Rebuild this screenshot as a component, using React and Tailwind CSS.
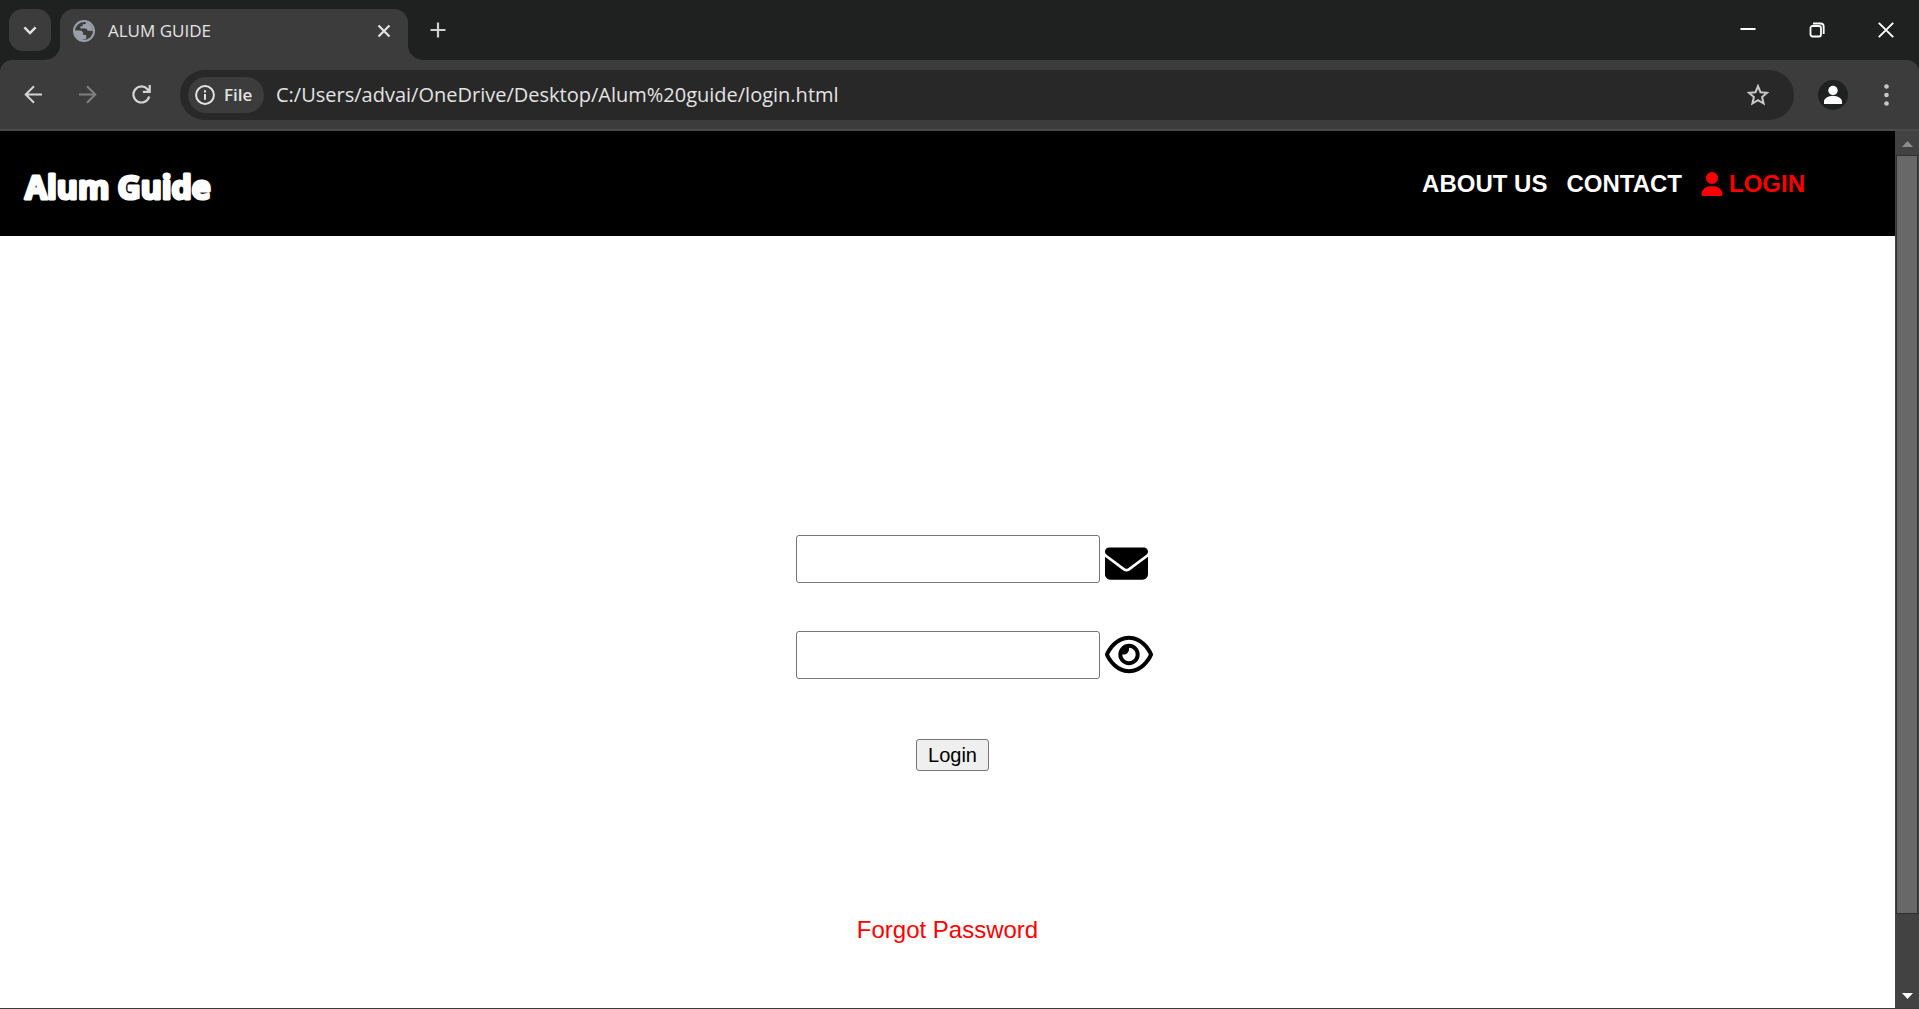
import React from "react";
import { FaEnvelope, FaRegEye, FaUser } from "react-icons/fa6";

const stroke = { fill: "none", stroke: "currentColor" };

function TabFoot({ className, d }) {
  return (
    <svg aria-hidden="true" viewBox="0 0 15 15" className={className}>
      <path d={d} fill="#3c3c3c" />
    </svg>
  );
}

function TabStrip() {
  return (
    <div className="flex h-[60px] items-end bg-[#1f2121]">
      <button
        aria-label="Search tabs"
        className="mb-[9px] ml-[9px] flex size-[42px] items-center justify-center rounded-[14px] bg-[#3c3c3c] text-[#e3e3e3]"
      >
        <svg viewBox="0 0 14 9" className="h-[9px] w-[14px]" {...stroke} strokeWidth="2.4">
          <path d="M1.4 1.4 7 7l5.600-5.600" />
        </svg>
      </button>
      <div className="relative ml-[9px] flex h-[51px] w-[348px] items-center rounded-t-[14px] bg-[#3c3c3c] pr-[14px] pb-2 pl-[13px] text-[#e3e3e3]">
        <TabFoot className="absolute bottom-0 -left-[15px] size-[15px]" d="M15 0v15H0A15 15 0 0 0 15 0Z" />
        <TabFoot className="absolute -right-[15px] bottom-0 size-[15px]" d="M0 0v15h15A15 15 0 0 1 0 0Z" />
        <svg aria-hidden="true" viewBox="0 0 22 22" className="size-[22px]">
          <circle cx="11" cy="11" r="10" fill="#3c3c3c" stroke="#9aa0a9" strokeWidth="2" />
          <path
            d="M13 2.200c.3 1.300-.4 2-1.600 2H9.600v2H7.400v2.300h4.800c1.400 0 2.300 1 2.300 2.300h3.200c1 0 1.500.5 2.300.4A9.500 9.500 0 0 0 13 2Z"
            fill="#9aa0a9"
          />
          <path
            d="M1.700 10.500h5.100c2 0 3.400 1.300 3.400 3.200v1.300h3v2.700c0 1-.8 1.700-1.800 1.700H9.500v1.200A9.500 9.500 0 0 1 1.700 10.500Z"
            fill="#9aa0a9"
          />
        </svg>
        <span className="ml-[13px] flex-1 text-[17px]">ALUM GUIDE</span>
        <button aria-label="Close tab" className="flex size-5 items-center justify-center">
          <svg viewBox="0 0 14 14" className="size-[14px]" {...stroke} strokeWidth="2.2">
            <path d="m1.500 1.500 11 11m0-11-11 11" />
          </svg>
        </button>
      </div>
      <button aria-label="New tab" className="mb-[15px] ml-[15px] flex size-[30px] items-center justify-center text-[#d0d0d0]">
        <svg viewBox="0 0 16 16" className="size-4" {...stroke} strokeWidth="2.200">
          <path d="M8 .5v15M.5 8h15" />
        </svg>
      </button>
      <div className="mr-[25px] mb-[22px] ml-auto flex items-center gap-[53px] text-white">
        <button aria-label="Minimize">
          <svg viewBox="0 0 16 16" className="size-4" {...stroke} strokeWidth="2">
            <path d="M.5 7h15" />
          </svg>
        </button>
        <button aria-label="Restore">
          <svg viewBox="0 0 16 16" className="size-4" {...stroke} strokeWidth="1.800">
            <rect x="1.500" y="4" width="10.500" height="10.500" rx="2" />
            <path d="M4 1.500h7.500a3.200 3.200 0 0 1 3.200 3.200V12" />
          </svg>
        </button>
        <button aria-label="Close window">
          <svg viewBox="0 0 16 16" className="size-4" {...stroke} strokeWidth="1.900">
            <path d="m.8.8 14.400 14.400m0-14.400L.8 15.200" />
          </svg>
        </button>
      </div>
    </div>
  );
}

function Toolbar() {
  return (
    <div className="bg-[#1f2121]">
      <div className="flex h-[71px] items-center rounded-t-[12px] border-b-2 border-[#4a4c4b] bg-[#3c3c3c] pr-[30px] pl-6">
        <div className="flex items-center gap-[35px] text-[#d4d4d4]">
          <button aria-label="Back">
            <svg viewBox="0 0 19 19" className="size-[19px]" {...stroke} strokeWidth="2">
              <path d="M18 9.500H2M10 1.200 1.700 9.500l8.300 8.300" />
            </svg>
          </button>
          <button aria-label="Forward" className="text-[#808080]">
            <svg viewBox="0 0 19 19" className="size-[19px]" {...stroke} strokeWidth="2">
              <path d="M1 9.500h16M9 1.200l8.300 8.300L9 17.800" />
            </svg>
          </button>
          <button aria-label="Reload">
            <svg viewBox="0 0 19 19" className="size-[19px]" {...stroke} strokeWidth="2.200">
              <path d="M17.200 11.500A8 8 0 1 1 15.300 4l2 2.300M17.700 0v6.800h-6.800" />
            </svg>
          </button>
        </div>
        <div className="ml-[29px] flex h-[50px] flex-1 items-center rounded-full bg-[#282828] pr-6 pl-2 text-[#e3e3e3]">
          <button className="flex h-9 w-[76px] items-center gap-[9px] rounded-full bg-[#3c3c3c] pl-[7px] text-[17px] font-semibold">
            <svg aria-hidden="true" viewBox="0 0 20 20" className="size-5" {...stroke} strokeWidth="2">
              <circle cx="10" cy="10" r="8.900" />
              <path d="M10 9v5.800M10 5.200v2.200" />
            </svg>
            File
          </button>
          <input
            aria-label="Address"
            defaultValue="C:/Users/advai/OneDrive/Desktop/Alum%20guide/login.html"
            className="ml-3 min-w-0 flex-1 bg-transparent text-xl outline-none"
          />
          <button aria-label="Bookmark" className="text-[#c8c8c8]">
            <svg viewBox="0 0 24 24" className="size-6" {...stroke} strokeWidth="2">
              <path d="m12 3.200 2.500 6 6.500.6-4.900 4.300 1.500 6.400-5.600-3.400-5.600 3.400 1.500-6.400L3 9.800l6.500-.6Z" />
            </svg>
          </button>
        </div>
        <button aria-label="Profile" className="ml-6 text-white">
          <svg viewBox="0 0 30 30" className="size-[30px]">
            <circle cx="15" cy="15" r="15" fill="#1f2121" />
            <circle cx="15" cy="10.500" r="4.700" fill="currentColor" />
            <path d="M6 24v-2.500C6 18 10.500 16 15 16s9 2 9 5.500V24Z" fill="currentColor" />
          </svg>
        </button>
        <button aria-label="Menu" className="ml-9 text-[#c8c8c8]">
          <svg viewBox="0 0 5 22" className="h-[22px] w-[5px]" fill="currentColor">
            <circle cx="2.500" cy="2.500" r="2.300" />
            <circle cx="2.500" cy="11" r="2.300" />
            <circle cx="2.500" cy="19.500" r="2.300" />
          </svg>
        </button>
      </div>
    </div>
  );
}

function Scrollbar() {
  return (
    <div className="flex w-6 flex-col border-b border-[#3c3c3c] bg-[#424242]">
      <div className="flex h-6 items-center justify-center pt-[2px]">
        <svg aria-hidden="true" viewBox="0 0 11 6" className="h-[6px] w-[11px]">
          <path d="M0 6 5.500 0 11 6Z" fill="#8c8c8c" />
        </svg>
      </div>
      <div className="mr-px ml-[1px] grow-[183] border border-[#303030] bg-[#686868]" />
      <div className="grow-[17]" />
      <div className="flex h-6 items-center justify-center">
        <svg aria-hidden="true" viewBox="0 0 11 6" className="h-[6px] w-[11px]">
          <path d="M0 0 5.500 6 11 0Z" fill="#fff" />
        </svg>
      </div>
    </div>
  );
}

function Logo() {
  return (
    <svg viewBox="0 0 200 36" className="h-9 w-[200px] overflow-visible font-['Open_Sans',sans-serif] text-[32px] font-bold">
      <text x="1" y="29" fill="#fff" stroke="#fff" strokeWidth="3" strokeLinejoin="round">
        Alum Guide
      </text>
    </svg>
  );
}

function SiteHeader() {
  return (
    <header className="flex h-[105px] items-center justify-between bg-black pr-[90px] pl-6 text-white">
      <a href="#home" className="pt-2">
        <Logo />
      </a>
      <nav className="flex items-center gap-[19px] text-2xl font-bold">
        <a href="#about">ABOUT US</a>
        <a href="#contact">CONTACT</a>
        <a href="#login" className="flex items-center gap-[6px] text-[#ff0000]">
          <FaUser className="h-6 w-[22px]" aria-hidden="true" />
          LOGIN
        </a>
      </nav>
    </header>
  );
}

function Field({ label, type, children }) {
  return (
    <div className="grid grid-cols-[1fr_304px_1fr] items-center gap-[5px]">
      <input
        type={type}
        aria-label={label}
        className="col-start-2 h-12 rounded-[3px] border border-[#767676] bg-white px-2 text-xl"
      />
      {children}
    </div>
  );
}

export default function App() {
  return (
    <div className="flex min-h-screen flex-col font-['Open_Sans','Noto_Sans',sans-serif]">
      <TabStrip />
      <Toolbar />
      <div className="flex flex-1">
        <div className="flex-1 border-b border-[#3c3c3c] bg-white font-['Liberation_Sans',Arial,sans-serif]">
          <SiteHeader />
          <form onSubmit={(e) => e.preventDefault()} className="flex flex-col gap-12 pt-[299px]">
            <Field label="Email" type="email">
              <FaEnvelope className="mt-1 -mb-1 size-[43px]" aria-hidden="true" />
            </Field>
            <Field label="Password" type="password">
              <button type="button" aria-label="Show password" className="-mt-px mb-px w-12">
                <FaRegEye className="h-[43px] w-12" />
              </button>
            </Field>
            <button className="mt-3 ml-[10px] h-8 self-center rounded-[3px] border border-[#767676] bg-[#efefef] px-[11px] text-xl leading-none text-black">
              Login
            </button>
          </form>
          <p className="mt-[143px] text-center text-2xl">
            <a href="#forgot" className="text-[#ff0000]">
              Forgot Password
            </a>
          </p>
        </div>
        <Scrollbar />
      </div>
    </div>
  );
}
